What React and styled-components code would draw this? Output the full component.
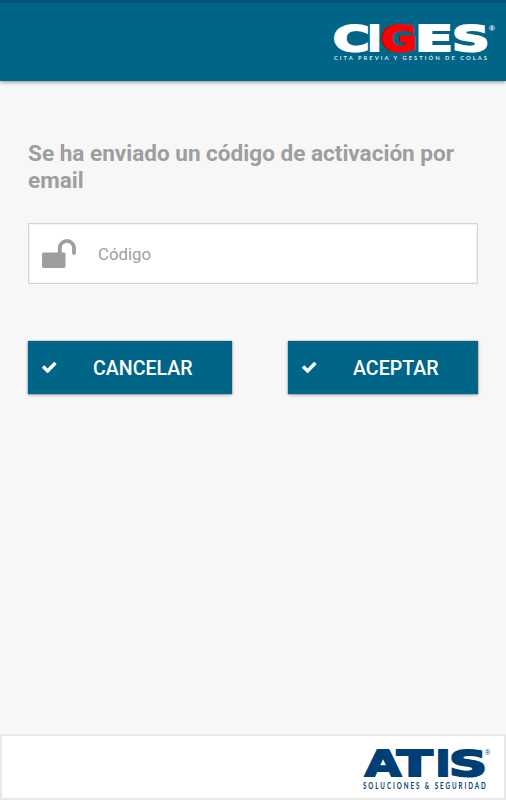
import React from 'react';
import styled, { createGlobalStyle } from 'styled-components';

const GlobalStyle = createGlobalStyle`
  * { box-sizing: border-box; }
  body { margin: 0; background: #f7f7f7; font-family: Roboto, sans-serif; }
`;

const Screen = styled.div`
  display: flex;
  flex-direction: column;
  width: 100%;
  height: 800px;
  overflow: hidden;
  background: #f7f7f7;
`;

const Header = styled.header`
  display: flex;
  justify-content: flex-end;
  flex: none;
  height: 81px;
  border-top: 3px solid #005476;
  background: #006587;
  box-shadow: 0 1px 4px rgba(0, 0, 0, 0.45);
`;

const CigesLogo = styled.svg`
  display: block;
  width: 181px;
  height: 78px;
`;

const Content = styled.main`
  flex: 1;
  padding: 59px 28px 0;
`;

const Title = styled.h1`
  margin: 0;
  font-size: 22.55px;
  line-height: 27px;
  font-weight: 700;
  color: #9e9e9e;
`;

const Field = styled.label`
  display: flex;
  align-items: center;
  height: 61px;
  margin-top: 29px;
  padding-left: 13px;
  border: 1px solid #d4d4d4;
  box-shadow: inset 0 0 0 1px #f3f3f3;
  background: #fff;
`;

const LockIcon = styled.svg`
  flex: none;
  width: 35px;
  height: 30px;
  margin-right: 21px;
`;

const Input = styled.input`
  flex: 1;
  min-width: 0;
  padding: 1px 0 0;
  border: 0;
  outline: 0;
  background: transparent;
  font: 400 16.8px Roboto, sans-serif;
  color: #555;
  &::placeholder { color: #9e9e9e; opacity: 1; }
`;

const Actions = styled.div`
  display: flex;
  justify-content: space-between;
  margin-top: 57px;
`;

const Button = styled.button`
  display: flex;
  align-items: center;
  width: ${(p) => p.$width}px;
  height: 53px;
  padding: 1px 0 0 13px;
  border: 0;
  background: #006587;
  box-shadow: 0 0 1px rgba(0, 0, 0, 0.5), 0 1px 3px rgba(0, 0, 0, 0.35);
  font: 500 19.6px Roboto, sans-serif;
  color: #fff;
`;

const CheckIcon = styled.svg`
  flex: none;
  width: 16.5px;
  height: 16.5px;
  margin: 0 35.5px 2px 0;
  fill: currentColor;
`;

const Footer = styled.footer`
  display: flex;
  justify-content: flex-end;
  flex: none;
  height: 66px;
  border: 2px solid #e8e8e8;
  background: #fff;
`;

const AtisLogo = styled.svg`
  display: block;
  width: 154px;
  height: 62px;
`;

const Wordmark = styled.text`
  font-family: 'DejaVu Sans', sans-serif;
  font-weight: 700;
  font-size: 35px;
  stroke-width: 2px;
  stroke-linejoin: miter;
`;

const Letter = ({ x, width, color, children }) => (
  <tspan x={x} textLength={width} lengthAdjust="spacingAndGlyphs" fill={color} stroke={color}>{children}</tspan>
);

const Check = () => (
  <CheckIcon viewBox="0 0 1792 1792">
    <path d="M1671 566q0 40-28 68l-724 724-136 136q-28 28-68 28t-68-28l-136-136-362-362q-28-28-28-68t28-68l136-136q28-28 68-28t68 28l294 295 656-657q28-28 68-28t68 28l136 136q28 28 28 68z" />
  </CheckIcon>
);

const NAVY = '#003f75';

export default function App() {
  return (
    <>
      <GlobalStyle />
      <Screen>
        <Header>
          <CigesLogo viewBox="325 3 181 78">
            <Wordmark y="51">
              <Letter x={333} width={36.5} color="#fff">C</Letter>
              <Letter x={367.5} width={14} color="#fff">I</Letter>
              <Letter x={381} width={36} color="#f00">G</Letter>
              <Letter x={415} width={38} color="#fff">E</Letter>
              <Letter x={452} width={37.5} color="#fff">S</Letter>
            </Wordmark>
            <text x="489" y="31" fontSize="8" fontFamily="Liberation Sans" fontWeight="700" fill="#fff">®</text>
            <text x="334" y="60" fontSize="5.8" textLength="153" fontFamily="Lato" fontWeight="700" fill="#d8e8ee">CITA PREVIA Y GESTIÓN DE COLAS</text>
          </CigesLogo>
        </Header>
        <Content>
          <Title>Se ha enviado un código de activación por email</Title>
          <Field>
            <LockIcon viewBox="0 0 35 30">
              <rect x="0" y="13.5" width="23.5" height="15.5" rx="1.7" fill="#9e9e9e" />
              <path d="M17.8 14V9a7.1 7.1 0 0 1 14.2 0v5" fill="none" stroke="#9e9e9e" strokeWidth="3.8" strokeLinecap="round" />
            </LockIcon>
            <Input placeholder="Código" />
          </Field>
          <Actions>
            <Button $width={204}><Check />CANCELAR</Button>
            <Button $width={190}><Check />ACEPTAR</Button>
          </Actions>
        </Content>
        <Footer>
          <AtisLogo viewBox="350 736 154 62">
            <Wordmark y="776">
              <Letter x={365} width={36} color={NAVY}>A</Letter>
              <Letter x={397} width={35.5} color={NAVY}>T</Letter>
              <Letter x={435.5} width={15} color={NAVY}>I</Letter>
              <Letter x={449} width={38} color={NAVY}>S</Letter>
            </Wordmark>
            <text x="485" y="755" fontSize="7" fontFamily="Liberation Sans" fill={NAVY}>®</text>
            <text transform="translate(363 789) scale(.62 1)" fontSize="10" textLength="198" fontFamily="Lato" fontWeight="700" fill={NAVY}>SOLUCIONES &amp; SEGURIDAD</text>
          </AtisLogo>
        </Footer>
      </Screen>
    </>
  );
}
